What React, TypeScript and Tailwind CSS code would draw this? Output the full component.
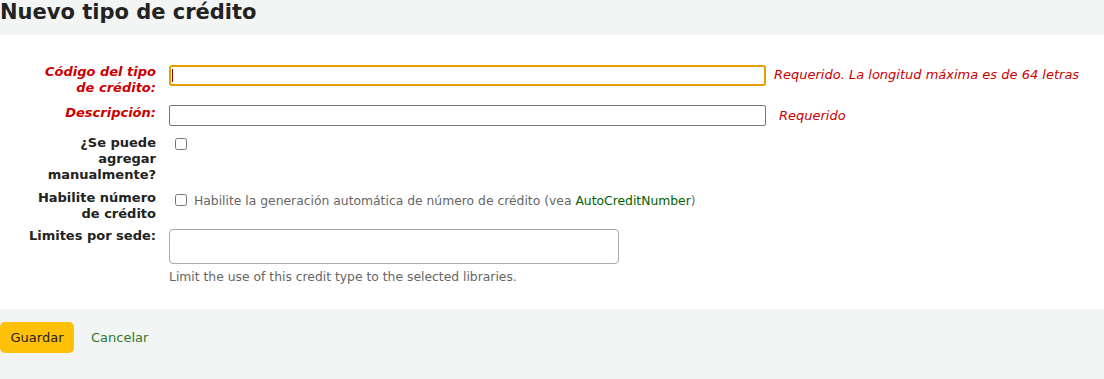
export default function App() {
  return (
    <div className="min-h-[379px] bg-[#f3f4f4] text-[#222] font-['DejaVu_Sans',sans-serif]">
      {/* Header */}
      <div className="h-[35px]">
        <h1 className="text-[21px] leading-[24px] font-bold text-[#222]">Nuevo tipo de crédito</h1>
      </div>

      {/* Form */}
      <div className="bg-white h-[274px] pt-[29px]">
        {/* Código */}
        <div className="flex items-start">
          <label className="w-[157px] pr-[1px] pl-[27px] text-right text-[13px] leading-[16px] font-bold italic text-[#cc0000]">
            Código del tipo de crédito:
          </label>
          <div className="ml-[12px] mt-[1px] w-[597px] h-[21px] border-2 border-[#e69f00] rounded-[3px] flex items-center pl-[1px]">
            <span className="w-[1px] h-[13px] bg-[#8b0000]" />
          </div>
          <span className="ml-[8px] mt-[3px] text-[13px] leading-[16px] italic text-[#cc0000]">
            Requerido. La longitud máxima es de 64 letras
          </span>
        </div>

        {/* Descripción */}
        <div className="flex items-start mt-[9px]">
          <label className="w-[157px] pr-[1px] pl-[27px] text-right text-[13px] leading-[16px] font-bold italic text-[#cc0000]">
            Descripción:
          </label>
          <div className="ml-[12px] w-[597px] h-[21px] border border-[#767676] rounded-[2px]" />
          <span className="ml-[13px] mt-[3px] text-[13px] leading-[16px] italic text-[#cc0000]">Requerido</span>
        </div>

        {/* Manual */}
        <div className="flex items-start mt-[9px]">
          <label className="w-[157px] pr-[1px] pl-[27px] text-right text-[13px] leading-[16px] font-bold">
            ¿Se puede agregar manualmente?
          </label>
          <input type="checkbox" className="ml-[18px] mt-[3px] w-[12px] h-[12px]" />
        </div>

        {/* Número */}
        <div className="flex items-start mt-[7px]">
          <label className="w-[157px] pr-[1px] pl-[27px] text-right text-[13px] leading-[16px] font-bold">
            Habilite número de crédito
          </label>
          <input type="checkbox" className="ml-[18px] mt-[4px] w-[12px] h-[12px]" />
          <span className="ml-[7px] mt-[3px] text-[12.35px] leading-[16px] text-[#666]">
            Habilite la generación automática de número de crédito (vea{' '}
            <a className="text-[#006100]">AutoCreditNumber</a>)
          </span>
        </div>

        {/* Sedes */}
        <div className="flex items-start mt-[6px]">
          <label className="w-[157px] pr-[1px] pl-[27px] text-right text-[13px] leading-[16px] font-bold">
            Limites por sede:
          </label>
          <div className="ml-[12px] mt-[1px] flex flex-col">
            <div className="w-[450px] h-[35px] border border-[#aaa] rounded-[4px] bg-white" />
            <span className="mt-[5px] text-[12.35px] leading-[16px] text-[#666]">
              Limit the use of this credit type to the selected libraries.
            </span>
          </div>
        </div>
      </div>

      {/* Actions */}
      <div className="flex items-center pt-[13px]">
        <button className="w-[74px] h-[31px] bg-[#ffc107] rounded-[5px] text-[13px] text-[#222]">Guardar</button>
        <a className="ml-[17px] text-[13px] text-[#2b7a2b]">Cancelar</a>
      </div>
    </div>
  );
}
